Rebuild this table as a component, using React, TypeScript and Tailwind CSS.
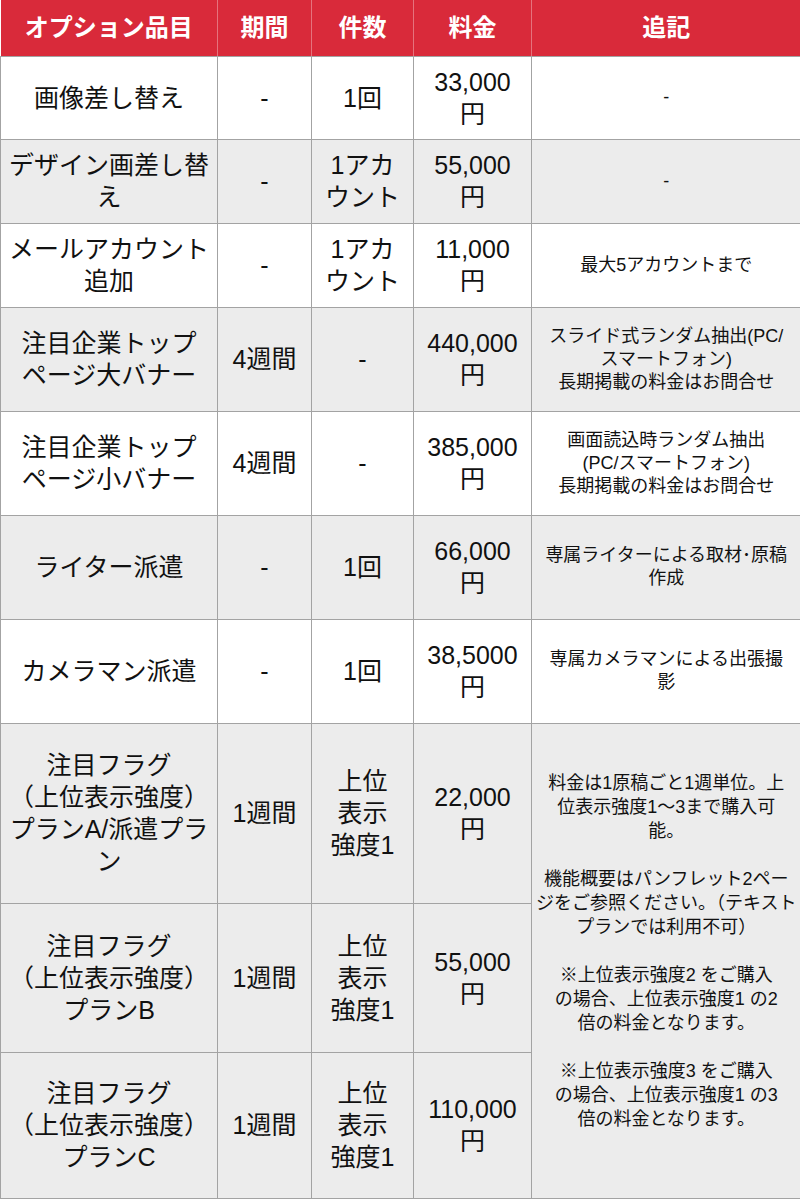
import React from 'react';

type Row = {
  name: React.ReactNode;
  period: React.ReactNode;
  count: React.ReactNode;
  price: React.ReactNode;
  note?: React.ReactNode;
  gray: boolean;
  h: string;
};

const rows: Row[] = [
  { name: '画像差し替え', period: '-', count: '1回', price: <>33,000<br />円</>, note: '-', gray: false, h: 'h-[83px]' },
  { name: <>デザイン画差し替<br />え</>, period: '-', count: <>1アカ<br />ウント</>, price: <>55,000<br />円</>, note: '-', gray: true, h: 'h-[84px]' },
  { name: <>メールアカウント<br />追加</>, period: '-', count: <>1アカ<br />ウント</>, price: <>11,000<br />円</>, note: '最大5アカウントまで', gray: false, h: 'h-[84px]' },
  {
    name: <>注目企業トップ<br />ページ大バナー</>, period: '4週間', count: '-', price: <>440,000<br />円</>,
    note: <>スライド式ランダム抽出(PC/<br />スマートフォン)<br />長期掲載の料金はお問合せ</>, gray: true, h: 'h-[104px]',
  },
  {
    name: <>注目企業トップ<br />ページ小バナー</>, period: '4週間', count: '-', price: <>385,000<br />円</>,
    note: <>画面読込時ランダム抽出<br />(PC/スマートフォン)<br />長期掲載の料金はお問合せ</>, gray: false, h: 'h-[104px]',
  },
  { name: 'ライター派遣', period: '-', count: '1回', price: <>66,000<br />円</>, note: <>専属ライターによる取材･原稿<br />作成</>, gray: true, h: 'h-[104px]' },
  { name: 'カメラマン派遣', period: '-', count: '1回', price: <>38,5000<br />円</>, note: <>専属カメラマンによる出張撮<br />影</>, gray: false, h: 'h-[104px]' },
  { name: <>注目フラグ<br />（上位表示強度）<br />プランA/派遣プラ<br />ン</>, period: '1週間', count: <>上位<br />表示<br />強度1</>, price: <>22,000<br />円</>, gray: true, h: 'h-[180px]' },
  { name: <>注目フラグ<br />（上位表示強度）<br />プランB</>, period: '1週間', count: <>上位<br />表示<br />強度1</>, price: <>55,000<br />円</>, gray: true, h: 'h-[149px]' },
  { name: <>注目フラグ<br />（上位表示強度）<br />プランC</>, period: '1週間', count: <>上位<br />表示<br />強度1</>, price: <>110,000<br />円</>, gray: true, h: 'h-[146px]' },
];

const cell = 'border border-[#a3a3a3] text-center align-middle px-1 text-[25px] leading-[32px] text-[#111]';
const noteCell = 'border border-[#a3a3a3] text-center align-middle px-1 text-[18px] leading-[23px] text-[#111]';
const head = 'border border-[#e5737d] border-t-0 border-b-[#a3a3a3] text-center align-middle text-white font-bold text-[24px]';

export default function App() {
  return (
    <div className="w-[800px] h-[1200px] bg-white" style={{ fontFamily: '"Liberation Sans", "Noto Sans CJK JP", sans-serif' }}>
      <table className="w-[800px] table-fixed border-collapse">
        <colgroup>
          <col className="w-[217px]" />
          <col className="w-[94px]" />
          <col className="w-[102px]" />
          <col className="w-[118px]" />
          <col className="w-[269px]" />
        </colgroup>
        <thead>
          <tr className="h-[56px] bg-[#d92a3a]">
            <th className={`${head} border-l-0`}>オプション品目</th>
            <th className={head}>期間</th>
            <th className={head}>件数</th>
            <th className={head}>料金</th>
            <th className={`${head} border-r-0`}>追記</th>
          </tr>
        </thead>
        <tbody>
          {rows.map((r, i) => (
            <tr key={i} className={`${r.h} ${r.gray ? 'bg-[#ececec]' : 'bg-white'}`}>
              <td className={cell}>{r.name}</td>
              <td className={cell}>{r.period}</td>
              <td className={cell}>{r.count}</td>
              <td className={cell}>{r.price}</td>
              {r.note !== undefined && <td className={`${noteCell} border-r-0`}>{r.note}</td>}
              {i === 7 && (
                <td rowSpan={3} className={`${noteCell} leading-[24px] pb-[20px] border-r-0 bg-[#ececec]`}>
                  <p>料金は1原稿ごと1週単位。上<br />位表示強度1～3まで購入可<br />能。</p>
                  <p className="mt-[24px]">機能概要はパンフレット2ペー<br />ジをご参照ください。（テキスト<br />プランでは利用不可）</p>
                  <p className="mt-[24px]">※上位表示強度2 をご購入<br />の場合、上位表示強度1 の2<br />倍の料金となります。</p>
                  <p className="mt-[24px]">※上位表示強度3 をご購入<br />の場合、上位表示強度1 の3<br />倍の料金となります。</p>
                </td>
              )}
            </tr>
          ))}
        </tbody>
      </table>
    </div>
  );
}
